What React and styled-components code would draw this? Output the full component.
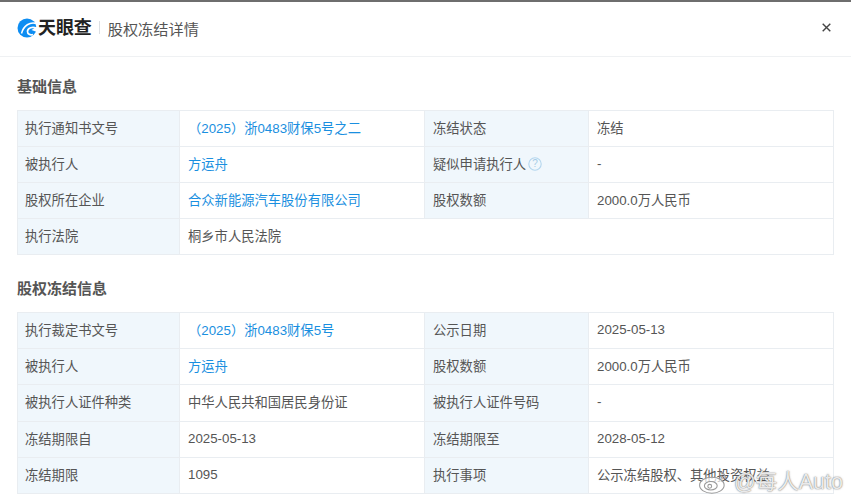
import React from "react";
import styled, { createGlobalStyle } from "styled-components";

const GlobalStyle = createGlobalStyle`
  html, body {
    margin: 0;
    padding: 0;
    height: 500px;
    overflow: hidden;
    background: #fff;
  }
  body {
    font-family: "Liberation Sans", Arial, "Noto Sans CJK SC", sans-serif;
    color: #333;
  }
`;

const Page = styled.div`
  position: relative;
  width: 851px;
  height: 500px;
  overflow: hidden;
  border-top: 2px solid #6e6e6e;
  box-sizing: border-box;
`;

const Header = styled.header`
  display: flex;
  align-items: center;
  height: 51px;
  padding: 0 20px 3px 17px;
  border-bottom: 1px solid #eff1f3;
  box-sizing: content-box;
`;

const Brand = styled.div`
  display: flex;
  align-items: center;
  gap: 1px;
  font-size: 18px;
  line-height: 20px;
  font-weight: 700;
  color: #222;
  letter-spacing: -0.1px;
`;

const Divider = styled.span`
  width: 1px;
  height: 13px;
  margin: 0 8px 0 7px;
  background: #dcdfe3;
`;

const HeaderTitle = styled.div`
  font-size: 15.2px;
  color: #555;
  flex: 1;
`;

const Close = styled.button`
  display: flex;
  padding: 0;
  border: 0;
  background: none;
  color: #444;
`;

const Main = styled.main`
  padding: 21px 17px 0;
`;

const SectionTitle = styled.h2`
  margin: 0 0 14px;
  font-size: 15px;
  line-height: 18px;
  font-weight: 700;
  color: #555;
`;

const Section = styled.section`
  margin-bottom: 25px;
`;

const Table = styled.table`
  width: 816px;
  table-layout: fixed;
  border-collapse: collapse;
  font-size: 13.3px;
`;

const Row = styled.tr`
  height: ${(p) => p.$h || 36}px;
`;

const Label = styled.th`
  width: ${(p) => p.$w}px;
  padding: 0 7px 3px ${(p) => p.$inset || 7}px;
  box-sizing: border-box;
  border: 1px solid #e9edf1;
  background: #f0f7fc;
  color: #555;
  font-weight: 400;
  text-align: left;
  white-space: nowrap;
`;

const Cell = styled.td`
  width: ${(p) => p.$w}px;
  padding: 0 8px 3px;
  box-sizing: border-box;
  border: 1px solid #e9edf1;
  color: #555;
  white-space: nowrap;
`;

const Link = styled.a`
  color: #1a8fe0;
  text-decoration: none;
`;

const Hint = styled.span`
  display: inline-flex;
  vertical-align: -2px;
  margin-left: 2px;
`;

const Watermark = styled.div`
  position: absolute;
  right: 8px;
  bottom: 5px;
  display: flex;
  align-items: center;
  gap: 4px;
  font-size: 21.5px;
  line-height: 24px;
  color: rgba(255, 255, 255, 0.85);
  text-shadow: 0 0 1px rgba(90, 90, 90, 0.8), 0 0 2px rgba(90, 90, 90, 0.5);
`;

const Logo = () => (
  <svg width="20" height="20" viewBox="0 0 20 20" fill="none">
    <circle cx="10" cy="10" r="9.5" fill="#0d8df2" />
    <path d="M19.500 5.500C13 3.500 6.500 7.500 4.500 15.500" stroke="#fff" strokeWidth="1.500" />
    <path d="M20 10.500C15.500 8 10.500 10 10.500 13.500 10.500 16 13 17.500 16 16.500" stroke="#fff" strokeWidth="1.700" />
    <path d="M20 8.500L14.500 12 20 14z" fill="#fff" />
  </svg>
);

const CloseIcon = () => (
  <svg width="9" height="9" viewBox="0 0 9 9">
    <path d="M.7.7l7.600 7.600M8.300.7L.7 8.300" stroke="currentColor" strokeWidth="1.400" fill="none" />
  </svg>
);

const HelpIcon = () => (
  <svg width="14" height="14" viewBox="0 0 14 14">
    <circle cx="7" cy="7" r="6.200" stroke="#b3d6ee" strokeWidth="1.100" fill="none" />
    <text x="7" y="10.400" textAnchor="middle" fontSize="10" fill="#a5cbe6" fontFamily="Liberation Sans">?</text>
  </svg>
);

const WeiboIcon = () => (
  <svg width="32" height="26" viewBox="0 0 30 24" fill="none">
    <ellipse cx="13" cy="15" rx="11.500" ry="7.500" fill="rgba(255,255,255,0.7)" stroke="#9a9a9a" />
    <ellipse cx="12" cy="15.500" rx="6" ry="4" stroke="#9a9a9a" />
    <circle cx="11" cy="16" r="1.800" stroke="#9a9a9a" />
    <path d="M20 3c3-.5 6 2 5.500 6M20 6.500c1.500-.3 3 1 2.500 3" stroke="#9a9a9a" strokeWidth="1.200" />
  </svg>
);

const W = [162, 245, 164, 245];

const basicRows = [
  ["执行通知书文号", <Link>（2025）浙0483财保5号之二</Link>, "冻结状态", "冻结"],
  ["被执行人", <Link>方运舟</Link>, <>疑似申请执行人<Hint><HelpIcon /></Hint></>, "-"],
  ["股权所在企业", <Link>合众新能源汽车股份有限公司</Link>, "股权数额", "2000.0万人民币"],
];

const freezeRows = [
  ["执行裁定书文号", <Link>（2025）浙0483财保5号</Link>, "公示日期", "2025-05-13"],
  ["被执行人", <Link>方运舟</Link>, "股权数额", "2000.0万人民币"],
  ["被执行人证件种类", "中华人民共和国居民身份证", "被执行人证件号码", "-", 37],
  ["冻结期限自", "2025-05-13", "冻结期限至", "2028-05-12"],
  ["冻结期限", "1095", "执行事项", "公示冻结股权、其他投资权益"],
];

const InfoRow = ({ cells }) => (
  <Row $h={cells[4]}>
    <Label $w={W[0]}>{cells[0]}</Label>
    <Cell $w={W[1]}>{cells[1]}</Cell>
    <Label $w={W[2]} $inset={8}>{cells[2]}</Label>
    <Cell $w={W[3]}>{cells[3]}</Cell>
  </Row>
);

export default function App() {
  return (
    <>
      <GlobalStyle />
      <Page>
        <Header>
          <Brand>
            <Logo />
            天眼查
          </Brand>
          <Divider />
          <HeaderTitle>股权冻结详情</HeaderTitle>
          <Close>
            <CloseIcon />
          </Close>
        </Header>
        <Main>
          <Section>
            <SectionTitle>基础信息</SectionTitle>
            <Table>
              <tbody>
                {basicRows.map((r, i) => (
                  <InfoRow key={i} cells={r} />
                ))}
                <Row>
                  <Label>执行法院</Label>
                  <Cell colSpan={3}>桐乡市人民法院</Cell>
                </Row>
              </tbody>
            </Table>
          </Section>
          <Section>
            <SectionTitle>股权冻结信息</SectionTitle>
            <Table>
              <tbody>
                {freezeRows.map((r, i) => (
                  <InfoRow key={i} cells={r} />
                ))}
              </tbody>
            </Table>
          </Section>
        </Main>
        <Watermark>
          <WeiboIcon />
          @每人Auto
        </Watermark>
      </Page>
    </>
  );
}
